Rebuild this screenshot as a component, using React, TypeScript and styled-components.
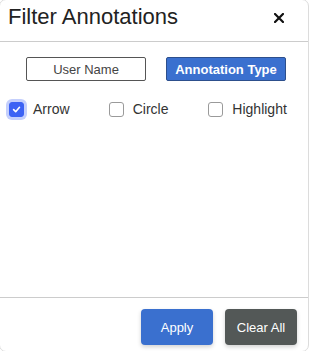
import React, { useState } from 'react';
import styled, { createGlobalStyle } from 'styled-components';

const GlobalStyle = createGlobalStyle`
  html, body {
    margin: 0;
    padding: 0;
    background: #ffffff;
    overflow: hidden;
  }
  body {
    font-family: 'Liberation Sans', Arial, sans-serif;
  }
`;

type FilterTab = 'user' | 'type';

const annotationTypes = ['Arrow', 'Circle', 'Highlight'];

const App: React.FC = () => {
  const [tab, setTab] = useState<FilterTab>('type');
  const [checked, setChecked] = useState<Array<string>>(['Arrow']);

  const toggle = (name: string) =>
    setChecked((prev) =>
      prev.includes(name) ? prev.filter((n) => n !== name) : [...prev, name],
    );

  return (
    <>
      <GlobalStyle />
      <DivModal>
        <DivHeader>
          <DivTitle>Filter Annotations</DivTitle>
          <ButtonClose aria-label="Close">
            <svg width="10" height="10" viewBox="0 0 10 10">
              <path
                d="M1 1 L9 9 M9 1 L1 9"
                stroke="#111"
                strokeWidth="2.2"
                strokeLinecap="square"
              />
            </svg>
          </ButtonClose>
        </DivHeader>
        <DivContent>
          <DivTabs>
            <ButtonTab $active={tab === 'user'} onClick={() => setTab('user')}>
              User Name
            </ButtonTab>
            <ButtonTab $active={tab === 'type'} onClick={() => setTab('type')}>
              Annotation Type
            </ButtonTab>
          </DivTabs>
          <DivOptions>
            {annotationTypes.map((name) => {
              const isChecked = checked.includes(name);
              return (
                <LabelOption key={name} onClick={() => toggle(name)}>
                  <SpanBox $checked={isChecked} $focused={name === 'Arrow'}>
                    {isChecked && (
                      <svg width="9" height="9" viewBox="0 0 10 10">
                        <path
                          d="M1.8 5.2 L4.1 7.4 L8.3 2.6"
                          fill="none"
                          stroke="#fff"
                          strokeWidth="1.8"
                          strokeLinecap="round"
                          strokeLinejoin="round"
                        />
                      </svg>
                    )}
                  </SpanBox>
                  <span>{name}</span>
                </LabelOption>
              );
            })}
          </DivOptions>
        </DivContent>
        <DivFooter>
          <ButtonAction $color="#3a70cf">Apply</ButtonAction>
          <ButtonAction $color="#535857" onClick={() => setChecked([])}>
            Clear All
          </ButtonAction>
        </DivFooter>
      </DivModal>
    </>
  );
};

const DivModal = styled.div`
  box-sizing: border-box;
  width: 310px;
  height: 353px;
  margin: -1px 0 0 -1px;
  border: 1px solid #dcdcdc;
  border-radius: 7px;
  display: flex;
  flex-direction: column;
  background: #fff;
`;

const DivHeader = styled.div`
  height: 42px;
  padding: 4px 0 0 8px;
  box-sizing: border-box;
  border-bottom: 1px solid #cccccc;
  display: flex;
  align-items: flex-start;
  flex-shrink: 0;
`;

const DivTitle = styled.div`
  color: #222;
  font-size: 22px;
  line-height: 26px;
`;

const ButtonClose = styled.button`
  margin: 8px 23px 0 auto;
  padding: 0;
  width: 12px;
  height: 12px;
  border: none;
  background: none;
  display: flex;
  align-items: center;
  justify-content: center;
  cursor: pointer;
`;

const DivContent = styled.div`
  flex: 1;
`;

const DivTabs = styled.div`
  display: flex;
  gap: 20px;
  padding: 15px 0 0 26px;
`;

const ButtonTab = styled.button<{ $active: boolean }>`
  box-sizing: border-box;
  width: 120px;
  height: 24px;
  padding: 0;
  border-radius: 2px;
  border: 1px solid ${(p) => (p.$active ? '#2d4f8c' : '#555')};
  background: ${(p) => (p.$active ? '#3a70cf' : '#fff')};
  color: ${(p) => (p.$active ? '#fff' : '#444')};
  font-family: 'Liberation Sans', Arial, sans-serif;
  font-size: 13px;
  font-weight: ${(p) => (p.$active ? 700 : 400)};
  cursor: pointer;
`;

const DivOptions = styled.div`
  display: flex;
  padding: 20px 0 0 9px;
`;

const LabelOption = styled.label`
  width: 100px;
  display: flex;
  align-items: center;
  gap: 9px;
  color: #333;
  font-size: 14px;
  line-height: 17px;
  cursor: pointer;
`;

const SpanBox = styled.span<{ $checked: boolean; $focused: boolean }>`
  box-sizing: border-box;
  width: 15px;
  height: 15px;
  border-radius: 3px;
  border: 1px solid ${(p) => (p.$checked ? '#3c62f4' : '#9a9a9a')};
  background: ${(p) => (p.$checked ? '#3c62f4' : '#fff')};
  box-shadow: ${(p) => (p.$focused ? '0 0 0 3px #c4cffc' : 'none')};
  display: flex;
  align-items: center;
  justify-content: center;
  flex-shrink: 0;
`;

const DivFooter = styled.div`
  border-top: 1px solid #cccccc;
  padding: 11px 11px 6px 0;
  display: flex;
  justify-content: flex-end;
  gap: 12px;
`;

const ButtonAction = styled.button<{ $color: string }>`
  width: 72px;
  height: 36px;
  border: none;
  border-radius: 4px;
  background: ${(p) => p.$color};
  color: #fff;
  font-family: 'Liberation Sans', Arial, sans-serif;
  font-size: 13px;
  box-shadow: 0 2px 4px rgba(0, 0, 0, 0.18);
  cursor: pointer;
`;

export default App;
